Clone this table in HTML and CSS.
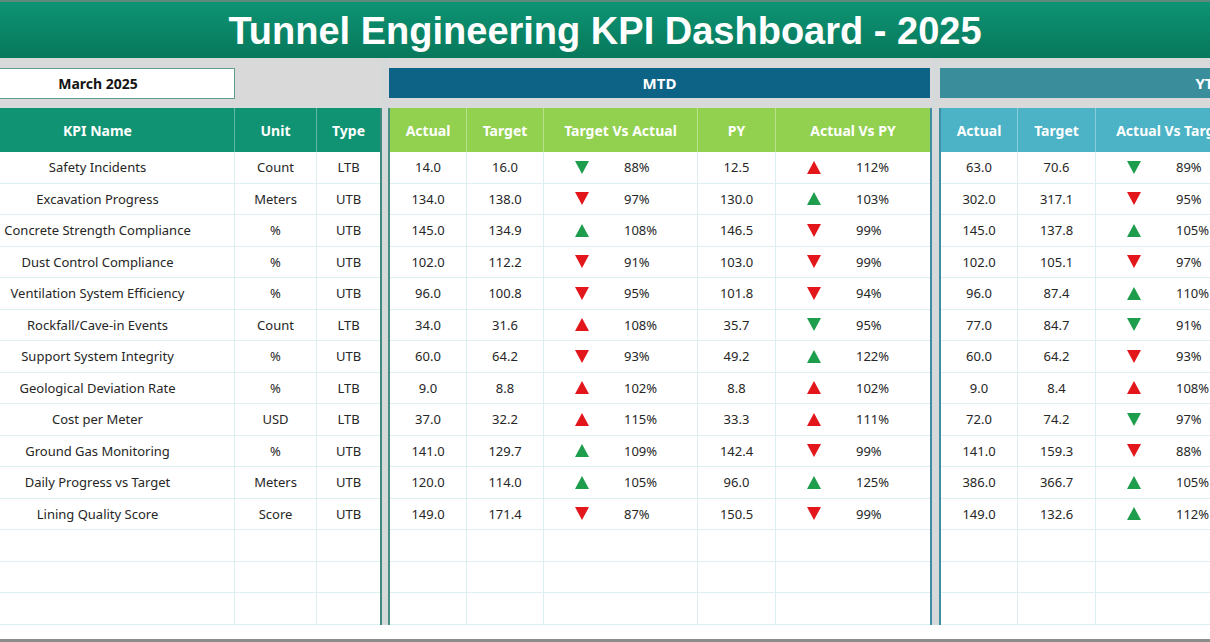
FILE: index.html
```html
<!DOCTYPE html>
<html lang="en">
<head>
<meta charset="utf-8">
<title>Tunnel Engineering KPI Dashboard - 2025</title>
<link rel="stylesheet" href="styles.css">
</head>
<body>
<div class="page">
  <header class="title-bar"><h1>Tunnel Engineering KPI Dashboard - 2025</h1></header>
  <div class="board">
    <section class="group kpi-group">
      <div class="band"><div class="date-box">March 2025</div></div>
      <div class="tbl kpi-tbl">
        <div class="th">KPI Name</div><div class="th">Unit</div><div class="th">Type</div>
        <div class="td">Safety Incidents</div><div class="td">Count</div><div class="td">LTB</div>
        <div class="td">Excavation Progress</div><div class="td">Meters</div><div class="td">UTB</div>
        <div class="td">Concrete Strength Compliance</div><div class="td">%</div><div class="td">UTB</div>
        <div class="td">Dust Control Compliance</div><div class="td">%</div><div class="td">UTB</div>
        <div class="td">Ventilation System Efficiency</div><div class="td">%</div><div class="td">UTB</div>
        <div class="td">Rockfall/Cave-in Events</div><div class="td">Count</div><div class="td">LTB</div>
        <div class="td">Support System Integrity</div><div class="td">%</div><div class="td">UTB</div>
        <div class="td">Geological Deviation Rate</div><div class="td">%</div><div class="td">LTB</div>
        <div class="td">Cost per Meter</div><div class="td">USD</div><div class="td">LTB</div>
        <div class="td">Ground Gas Monitoring</div><div class="td">%</div><div class="td">UTB</div>
        <div class="td">Daily Progress vs Target</div><div class="td">Meters</div><div class="td">UTB</div>
        <div class="td">Lining Quality Score</div><div class="td">Score</div><div class="td">UTB</div>
        <div class="td"></div><div class="td"></div><div class="td"></div>
        <div class="td"></div><div class="td"></div><div class="td"></div>
        <div class="td"></div><div class="td"></div><div class="td"></div>
      </div>
    </section>

    <section class="group mtd-group">
      <div class="band"><div class="band-bar mtd-bar">MTD</div></div>
      <div class="tbl period-tbl mtd-tbl">
        <div class="th">Actual</div><div class="th">Target</div><div class="th">Target Vs Actual</div><div class="th">PY</div><div class="th">Actual Vs PY</div>

        <div class="td">14.0</div><div class="td">16.0</div><div class="td ic"><span class="tri dn g"></span><span class="pct">88%</span></div><div class="td">12.5</div><div class="td ic"><span class="tri up r"></span><span class="pct">112%</span></div>
        <div class="td">134.0</div><div class="td">138.0</div><div class="td ic"><span class="tri dn r"></span><span class="pct">97%</span></div><div class="td">130.0</div><div class="td ic"><span class="tri up g"></span><span class="pct">103%</span></div>
        <div class="td">145.0</div><div class="td">134.9</div><div class="td ic"><span class="tri up g"></span><span class="pct">108%</span></div><div class="td">146.5</div><div class="td ic"><span class="tri dn r"></span><span class="pct">99%</span></div>
        <div class="td">102.0</div><div class="td">112.2</div><div class="td ic"><span class="tri dn r"></span><span class="pct">91%</span></div><div class="td">103.0</div><div class="td ic"><span class="tri dn r"></span><span class="pct">99%</span></div>
        <div class="td">96.0</div><div class="td">100.8</div><div class="td ic"><span class="tri dn r"></span><span class="pct">95%</span></div><div class="td">101.8</div><div class="td ic"><span class="tri dn r"></span><span class="pct">94%</span></div>
        <div class="td">34.0</div><div class="td">31.6</div><div class="td ic"><span class="tri up r"></span><span class="pct">108%</span></div><div class="td">35.7</div><div class="td ic"><span class="tri dn g"></span><span class="pct">95%</span></div>
        <div class="td">60.0</div><div class="td">64.2</div><div class="td ic"><span class="tri dn r"></span><span class="pct">93%</span></div><div class="td">49.2</div><div class="td ic"><span class="tri up g"></span><span class="pct">122%</span></div>
        <div class="td">9.0</div><div class="td">8.8</div><div class="td ic"><span class="tri up r"></span><span class="pct">102%</span></div><div class="td">8.8</div><div class="td ic"><span class="tri up r"></span><span class="pct">102%</span></div>
        <div class="td">37.0</div><div class="td">32.2</div><div class="td ic"><span class="tri up r"></span><span class="pct">115%</span></div><div class="td">33.3</div><div class="td ic"><span class="tri up r"></span><span class="pct">111%</span></div>
        <div class="td">141.0</div><div class="td">129.7</div><div class="td ic"><span class="tri up g"></span><span class="pct">109%</span></div><div class="td">142.4</div><div class="td ic"><span class="tri dn r"></span><span class="pct">99%</span></div>
        <div class="td">120.0</div><div class="td">114.0</div><div class="td ic"><span class="tri up g"></span><span class="pct">105%</span></div><div class="td">96.0</div><div class="td ic"><span class="tri up g"></span><span class="pct">125%</span></div>
        <div class="td">149.0</div><div class="td">171.4</div><div class="td ic"><span class="tri dn r"></span><span class="pct">87%</span></div><div class="td">150.5</div><div class="td ic"><span class="tri dn r"></span><span class="pct">99%</span></div>
        <div class="td"></div><div class="td"></div><div class="td"></div><div class="td"></div><div class="td"></div>
        <div class="td"></div><div class="td"></div><div class="td"></div><div class="td"></div><div class="td"></div>
        <div class="td"></div><div class="td"></div><div class="td"></div><div class="td"></div><div class="td"></div>
      </div>
    </section>

    <section class="group ytd-group">
      <div class="band"><div class="band-bar ytd-bar">YTD</div></div>
      <div class="tbl period-tbl ytd-tbl">
        <div class="th">Actual</div><div class="th">Target</div><div class="th">Actual Vs Target</div><div class="th">PY</div><div class="th">Actual Vs PY</div>

        <div class="td">63.0</div><div class="td">70.6</div><div class="td ic"><span class="tri dn g"></span><span class="pct">89%</span></div><div class="td"></div><div class="td"></div>
        <div class="td">302.0</div><div class="td">317.1</div><div class="td ic"><span class="tri dn r"></span><span class="pct">95%</span></div><div class="td"></div><div class="td"></div>
        <div class="td">145.0</div><div class="td">137.8</div><div class="td ic"><span class="tri up g"></span><span class="pct">105%</span></div><div class="td"></div><div class="td"></div>
        <div class="td">102.0</div><div class="td">105.1</div><div class="td ic"><span class="tri dn r"></span><span class="pct">97%</span></div><div class="td"></div><div class="td"></div>
        <div class="td">96.0</div><div class="td">87.4</div><div class="td ic"><span class="tri up g"></span><span class="pct">110%</span></div><div class="td"></div><div class="td"></div>
        <div class="td">77.0</div><div class="td">84.7</div><div class="td ic"><span class="tri dn g"></span><span class="pct">91%</span></div><div class="td"></div><div class="td"></div>
        <div class="td">60.0</div><div class="td">64.2</div><div class="td ic"><span class="tri dn r"></span><span class="pct">93%</span></div><div class="td"></div><div class="td"></div>
        <div class="td">9.0</div><div class="td">8.4</div><div class="td ic"><span class="tri up r"></span><span class="pct">108%</span></div><div class="td"></div><div class="td"></div>
        <div class="td">72.0</div><div class="td">74.2</div><div class="td ic"><span class="tri dn g"></span><span class="pct">97%</span></div><div class="td"></div><div class="td"></div>
        <div class="td">141.0</div><div class="td">159.3</div><div class="td ic"><span class="tri dn r"></span><span class="pct">88%</span></div><div class="td"></div><div class="td"></div>
        <div class="td">386.0</div><div class="td">366.7</div><div class="td ic"><span class="tri up g"></span><span class="pct">105%</span></div><div class="td"></div><div class="td"></div>
        <div class="td">149.0</div><div class="td">132.6</div><div class="td ic"><span class="tri up g"></span><span class="pct">112%</span></div><div class="td"></div><div class="td"></div>
        <div class="td"></div><div class="td"></div><div class="td"></div><div class="td"></div><div class="td"></div>
        <div class="td"></div><div class="td"></div><div class="td"></div><div class="td"></div><div class="td"></div>
        <div class="td"></div><div class="td"></div><div class="td"></div><div class="td"></div><div class="td"></div>
      </div>
    </section>
  </div>
  <div class="foot"></div>
</div>
</body>
</html>
```

FILE: styles.css
```css
html, body {
  margin: 0;
  padding: 0;
  background: #ffffff;
  overflow: hidden;
}
body {
  width: 1210px;
  height: 642px;
  font-family: "Noto Sans", "Liberation Sans", sans-serif;
  color: #262626;
}
.page {
  width: 1210px;
  height: 642px;
  display: flex;
  flex-direction: column;
  overflow: hidden;
}
.title-bar {
  height: 56px;
  border-top: 2px solid #5f8a7e;
  background: linear-gradient(#0d9474, #0a8365 60%, #07785b);
  display: flex;
  align-items: center;
  justify-content: center;
  flex-shrink: 0;
}
.title-bar h1 {
  margin: 0;
  padding-top: 2px;
  font-family: "Liberation Sans", Arial, sans-serif;
  font-weight: 700;
  font-size: 38px;
  color: #ffffff;
  letter-spacing: 0;
}
.board {
  display: flex;
  margin-left: -39px;
  width: 1800px;
  background: #d6d9da;
  flex-shrink: 0;
  gap: 6px;
}
.group {
  display: flex;
  flex-direction: column;
  flex-shrink: 0;
}
.band {
  height: 50px;
  box-sizing: border-box;
  padding-top: 10px;
  background: #d9d9d9;
}
.date-box {
  width: 274px;
  height: 31px;
  box-sizing: border-box;
  border: 1px solid #5f9f92;
  background: #ffffff;
  display: flex;
  align-items: center;
  justify-content: center;
  font-weight: 700;
  font-size: 14px;
  color: #141414;
}
.band-bar {
  height: 30px;
  margin: 0 2px 0 1px;
  display: flex;
  align-items: center;
  justify-content: center;
  color: #ffffff;
  font-weight: 700;
  font-size: 15px;
}
.mtd-bar { background: #0d6386; }
.ytd-bar { background: #3a8e9b; }
.ytd-group { margin-left: 1px; }

.tbl {
  display: grid;
  grid-template-rows: 44px;
  grid-auto-rows: 31.5px;
  background: #ffffff;
}
.kpi-tbl {
  grid-template-columns: 274px 82px 63px;
  border-right: 2px solid #3e8a7c;
}
.period-tbl {
  grid-template-columns: 77px 77px 154px 78px 154px;
}
.mtd-tbl {
  border-left: 2px solid #4a8f86;
  border-right: 2px solid #3f8ea4;
}
.ytd-tbl {
  border-left: 2px solid #3f8ea4;
  grid-template-columns: 77px 78px 154px 78px 154px;
}
.th {
  display: flex;
  align-items: center;
  justify-content: center;
  color: #ffffff;
  font-weight: 700;
  font-size: 14px;
  border-right: 1px solid rgba(255, 255, 255, 0.35);
}
.th:last-child { border-right: none; }
.kpi-tbl .th { background: #0f9373; }
.kpi-tbl .th:nth-child(3) { border-right: none; }
.mtd-tbl .th { background: #92d050; }
.mtd-tbl .th:nth-child(5) { border-right: none; }
.ytd-tbl .th { background: #4cb2c6; }

.td {
  display: flex;
  align-items: center;
  justify-content: center;
  font-size: 13px;
  border-right: 1px solid #dcf0f2;
  border-bottom: 1px solid #dcf0f2;
  white-space: nowrap;
}
.kpi-tbl .td:nth-child(3n) { border-right: none; }
.mtd-tbl .td:nth-child(5n) { border-right: none; }

.td.ic {
  justify-content: flex-start;
  padding-left: 31px;
}
.tri {
  width: 0;
  height: 0;
  border-left: 7px solid transparent;
  border-right: 7px solid transparent;
  flex-shrink: 0;
}
.tri.up.g { border-bottom: 13px solid #1e9e4c; }
.tri.up.r { border-bottom: 13px solid #e3161c; }
.tri.dn.g { border-top: 13px solid #1e9e4c; }
.tri.dn.r { border-top: 13px solid #e3161c; }
.pct {
  margin-left: 35px;
}
.foot {
  flex: 1;
  background: #ffffff;
  border-bottom: 3px solid #8c8c8c;
}
```
